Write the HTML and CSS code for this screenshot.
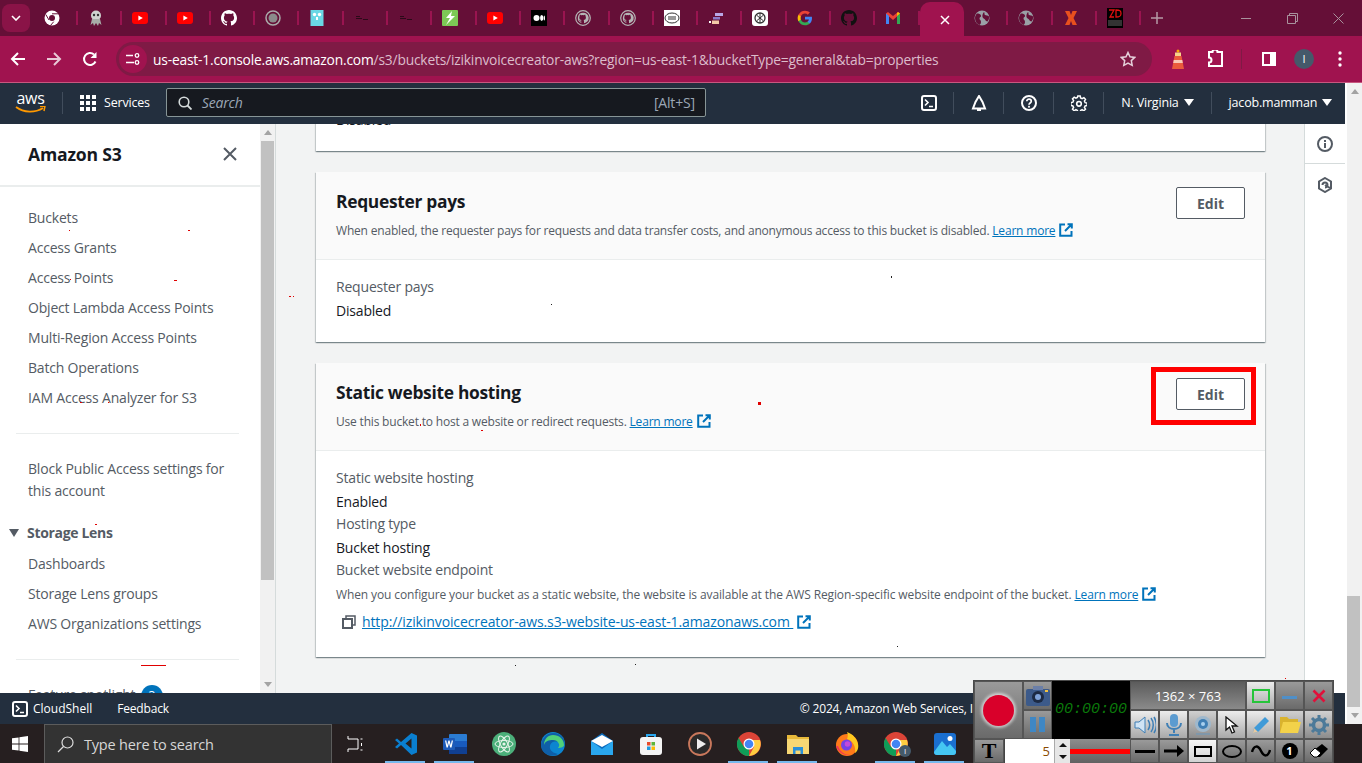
FILE: index.html
```html
<!DOCTYPE html>
<html lang="en">
<head>
    <meta charset="UTF-8">
    <title>izikinvoicecreator-aws - S3 bucket</title>
    <link rel="stylesheet" href="styles.css">
</head>
<body>
    <svg class="defs" width="0" height="0">
        <symbol id="gh" viewBox="0 0 16 16"><path fill="currentColor" d="M8 0C3.6 0 0 3.6 0 8c0 3.5 2.3 6.5 5.5 7.6.4.1.5-.2.5-.4v-1.4c-2.2.5-2.7-1-2.7-1-.4-.9-.9-1.2-.9-1.2-.7-.5.1-.5.1-.5.8.1 1.2.8 1.2.8.7 1.2 1.9.9 2.3.7.1-.5.3-.9.5-1.1-1.8-.2-3.6-.9-3.6-4 0-.9.3-1.6.8-2.1-.1-.2-.4-1 .1-2.1 0 0 .7-.2 2.2.8.6-.2 1.3-.3 2-.3s1.4.1 2 .3c1.5-1 2.2-.8 2.2-.8.4 1.1.2 1.9.1 2.1.5.6.8 1.3.8 2.1 0 3.1-1.9 3.7-3.7 3.9.3.3.6.8.6 1.5v2.2c0 .2.1.5.6.4C13.7 14.5 16 11.5 16 8c0-4.4-3.6-8-8-8z"/></symbol>
        <symbol id="yt" viewBox="0 0 16 16"><rect y="2" width="16" height="12" rx="3" fill="#f00"/><path d="M6.4 5.4 10.8 8l-4.4 2.6z" fill="#fff"/></symbol>
        <symbol id="globe" viewBox="0 0 16 16"><circle cx="8" cy="8" r="7.5" fill="#9aa0a6"/><path d="M3 3.5c2 0 3.5.5 4 2S5.500 7 5.500 8.500 7 10 7 12s-1 2.500-1.500 3C3 14 1 11.500 1 8c0-2 1-3.500 2-4.500zM10 2c1 1 0 2.500 1 3s3 0 4 1.500c.3 2-.5 4-1.500 5-1 0-2-1-2.500-2s-2-1-2.500-2.500S9 3 10 2z" fill="#650f37"/></symbol>
        <symbol id="gitring" viewBox="0 0 16 16"><circle cx="8" cy="8" r="7.300" fill="none" stroke="#b5b5b5" stroke-width="1.200"/><path fill="#b5b5b5" d="M8 2.800a5.200 5.200 0 0 0-1.700 10.100v-1.500c-1.400.3-1.700-.7-1.700-.7-.3-.6-.6-.7-.6-.7-.5-.3 0-.3 0-.3.500 0 .8.500.8.500.5.800 1.200.6 1.500.4.100-.3.200-.6.300-.7-1.200-.1-2.300-.6-2.300-2.500 0-.6.200-1 .5-1.400-.1-.1-.2-.6.100-1.300 0 0 .5-.1 1.400.5a5 5 0 0 1 2.600 0c.9-.6 1.400-.5 1.400-.5.300.7.100 1.200.1 1.300.3.400.5.800.5 1.400 0 1.900-1.100 2.400-2.300 2.500.2.200.4.500.4 1v2.300A5.200 5.200 0 0 0 8 2.800z"/></symbol>
        <symbol id="ext" viewBox="0 0 14 14"><path d="M6 1.500H1.200v11.300h11.300V8M8.500 1.200h4.300v4.300M12.500 1.500 6 8" fill="none" stroke="#0073bb" stroke-width="2"/></symbol>
        <symbol id="term" viewBox="0 0 16 16"><rect x="1" y="1" width="14" height="14" rx="2" fill="none" stroke="currentColor" stroke-width="2"/><path d="m4 4.500 3 3-3 3M8 11.500h4" fill="none" stroke="currentColor" stroke-width="1.600"/></symbol>
        <symbol id="chromeapp" viewBox="0 0 24 24"><circle cx="12" cy="12" r="12" fill="#db4437"/><path d="M12 24A12 12 0 0 1 1.600 6L7 15l5 1z" fill="#0f9d58"/><path d="M12 24 17 15l-1-7h7A12 12 0 0 1 12 24z" fill="#ffcd40"/><circle cx="12" cy="12" r="5.500" fill="#fff"/><circle cx="12" cy="12" r="4.300" fill="#4285f4"/></symbol>
    </svg>

    <div class="browser">
        <div class="tabstrip">
            <div class="tab-menu"><svg width="10" height="6" viewBox="0 0 10 6"><path d="m1 1 4 4 4-4" fill="none" stroke="#fff" stroke-width="1.600"/></svg></div>
            <div class="tabs">
                <div class="tab"><svg viewBox="0 0 16 16"><circle cx="8" cy="8" r="7.500" fill="#fff"/><circle cx="8" cy="8" r="3" fill="#650f37"/><path d="M8 3.800h6.800M5 10 1.800 4.500M9.700 11.700 6.500 15.500" stroke="#650f37" stroke-width="1"/></svg></div>
                <div class="tab"><svg viewBox="0 0 16 16"><circle cx="8" cy="5.500" r="5" fill="#cfd3cf"/><circle cx="6" cy="5" r="1.200" fill="#333"/><circle cx="10" cy="5" r="1.200" fill="#333"/><path d="M2.500 15 4 9h8l1.500 6-2.500-2-1 3-2-3-2 3-1-3z" fill="#a8aca8"/></svg></div>
                <div class="tab"><svg><use href="#yt"/></svg></div>
                <div class="tab"><svg><use href="#yt"/></svg></div>
                <div class="tab tab-white"><svg><use href="#gh"/></svg></div>
                <div class="tab"><svg viewBox="0 0 16 16"><circle cx="8" cy="8" r="7" fill="none" stroke="#aaa" stroke-width="1.500"/><circle cx="8" cy="8" r="4.500" fill="#8b8b8b"/></svg></div>
                <div class="tab"><svg viewBox="0 0 16 16"><rect x="1.500" width="13" height="16" fill="#6ad7e5"/><circle cx="5.500" cy="4.500" r="1.700" fill="#fff"/><circle cx="10.500" cy="4.500" r="1.700" fill="#fff"/><path d="M7 7h2v3H7z" fill="#fff"/></svg></div>
                <div class="tab"><svg viewBox="0 0 16 16"><path d="M2 6h4v1H2zM2 8h6v1H2zM9 9h5v1H9z" fill="#2a0a18"/></svg></div>
                <div class="tab"><svg viewBox="0 0 16 16"><path d="M2 6h4v1H2zM2 8h6v1H2zM9 9h5v1H9z" fill="#2a0a18"/></svg></div>
                <div class="tab"><svg viewBox="0 0 16 16"><rect width="16" height="16" rx="1" fill="#7dc855"/><path d="M10 1 4 8h4l-4 7 9-9H9z" fill="#fff"/></svg></div>
                <div class="tab"><svg><use href="#yt"/></svg></div>
                <div class="tab"><svg viewBox="0 0 16 16"><rect width="16" height="16" fill="#000"/><circle cx="5.500" cy="8" r="3" fill="#fff"/><ellipse cx="10.700" cy="8" rx="1.600" ry="2.900" fill="#fff"/><ellipse cx="13.300" cy="8" rx=".7" ry="2.500" fill="#fff"/></svg></div>
                <div class="tab"><svg><use href="#gitring"/></svg></div>
                <div class="tab"><svg><use href="#gitring"/></svg></div>
                <div class="tab"><svg viewBox="0 0 16 16"><rect width="16" height="16" fill="#fff"/><ellipse cx="8" cy="8" rx="7" ry="5" fill="none" stroke="#333"/><path d="M4 6.500h8v1H4zM4 8.500h8v1H4z" fill="#333"/></svg></div>
                <div class="tab"><svg viewBox="0 0 16 16"><path d="M7 3h8v3H7z" fill="#b9a7e6"/><path d="M5 7h7v2.500H5z" fill="#8c7ac9"/><path d="M1 11h2v2H1z" fill="#fff"/><path d="M4 10.500h7V14H4z" fill="#f4c8a8"/></svg></div>
                <div class="tab"><svg viewBox="0 0 16 16"><rect width="16" height="16" rx="3" fill="#fff"/><circle cx="8" cy="8" r="5" fill="none" stroke="#333" stroke-width="1.300"/><path d="M5 5.500 11 10.500M11 5.500 5 10.500M8 3v10" stroke="#333"/></svg></div>
                <div class="tab"><svg viewBox="0 0 48 48"><path fill="#4285f4" d="M45 24.500c0-1.600-.1-3.100-.4-4.500H24v8.500h11.800c-.5 2.700-2.100 5-4.400 6.600v5.500h7.100C42.700 36.700 45 31.100 45 24.500z"/><path fill="#34a853" d="M24 46c5.900 0 10.900-2 14.500-5.300l-7.100-5.500c-2 1.300-4.500 2.100-7.400 2.100-5.700 0-10.500-3.800-12.300-9H4.400v5.700C8 41.100 15.400 46 24 46z"/><path fill="#fbbc05" d="M11.700 28.300a13 13 0 0 1 0-8.500v-5.700H4.400a22 22 0 0 0 0 19.900z"/><path fill="#ea4335" d="M24 10.700c3.200 0 6.100 1.100 8.400 3.300l6.300-6.300C34.900 4.200 29.900 2 24 2 15.400 2 8 6.900 4.400 14.100l7.300 5.700c1.800-5.200 6.600-9.100 12.300-9.100z"/></svg></div>
                <div class="tab tab-black"><svg><use href="#gh"/></svg></div>
                <div class="tab"><svg viewBox="0 0 16 16"><path d="M1 14V3.500L3 2l5 4 5-4 2 1.500V14h-3V6.500L8 10 4 6.500V14z" fill="#ea4335"/><path d="M1 14V3.500L4 6v8z" fill="#4285f4"/><path d="M12 14V6l3-2.500V14z" fill="#34a853"/><path d="M12 6 15 3.500 13 2 12 3z" fill="#fbbc05"/></svg></div>
                <div class="tab tab-active"><svg viewBox="0 0 16 16"><path d="m4 4 8 8M12 4l-8 8" stroke="#fff" stroke-width="1.500"/></svg></div>
                <div class="tab"><svg><use href="#globe"/></svg></div>
                <div class="tab"><svg><use href="#globe"/></svg></div>
                <div class="tab"><svg viewBox="0 0 16 16"><path d="M2 1h4.500L8 5l1.500-4H14l-3.500 7 3.500 7H9.500L8 11l-1.500 4H2l3.500-7z" fill="#e8501e"/></svg></div>
                <div class="tab"><svg viewBox="0 0 16 20" class="zd"><rect width="16" height="20" fill="#000"/><path d="M2 2h5L3 9h4M9 2v7c4 0 5-1 5-3.500S13 2 9 2z" fill="none" stroke="#e01010" stroke-width="1.300"/><rect x="1" y="12" width="14" height="6" fill="#333"/></svg></div>
                <div class="tab-new"><svg width="12" height="12" viewBox="0 0 12 12"><path d="M6 0v12M0 6h12" stroke="#b59aa7" stroke-width="1.500"/></svg></div>
            </div>
            <div class="window-btns">
                <span class="win-btn"><svg width="11" height="11" viewBox="0 0 11 11"><path d="M0 5.500h10" stroke="#a9929d"/></svg></span>
                <span class="win-btn"><svg width="11" height="11" viewBox="0 0 11 11"><path d="M.5 2.500h8v8h-8zM2.500 2.500v-2h8v8h-2" fill="none" stroke="#a9929d"/></svg></span>
                <span class="win-btn"><svg width="11" height="11" viewBox="0 0 11 11"><path d="m.5.500 10 10M10.500.500l-10 10" stroke="#a9929d"/></svg></span>
            </div>
        </div>

        <div class="toolbar">
            <svg class="tool-btn" width="16" height="16" viewBox="0 0 16 16"><path d="M15 8H2M8 2 2 8l6 6" fill="none" stroke="#fff" stroke-width="2"/></svg>
            <svg class="tool-btn" width="16" height="16" viewBox="0 0 16 16"><path d="M1 8h13M8 2l6 6-6 6" fill="none" stroke="#e9c9d7" stroke-width="2"/></svg>
            <svg class="tool-btn" width="16" height="16" viewBox="0 0 16 16"><path d="M13.500 10.500A6 6 0 1 1 12 3.500" fill="none" stroke="#fff" stroke-width="2"/><path d="M14.500 1v6h-6z" fill="#fff"/></svg>
            <div class="omnibox">
                <span class="site-info"><svg width="14" height="14" viewBox="0 0 14 14"><path d="M0 3.500h7M0 10.500h8" stroke="#fff" stroke-width="1.500"/><circle cx="11" cy="3.500" r="1.800" fill="none" stroke="#fff" stroke-width="1.300"/><circle cx="11" cy="10.500" r="1.800" fill="none" stroke="#fff" stroke-width="1.300"/></svg></span>
                <span class="url"><b>us-east-1.console.aws.amazon.com</b>/s3/buckets/izikinvoicecreator-aws?region=us-east-1&amp;bucketType=general&amp;tab=properties</span>
                <svg class="star" width="16" height="16" viewBox="0 0 16 16"><path d="m8 1.500 2 4.300 4.700.6-3.400 3.200.9 4.700L8 12l-4.200 2.300.9-4.700L1.300 6.400 6 5.800z" fill="none" stroke="#e5d0da" stroke-width="1.500"/></svg>
            </div>
            <div class="tool-right">
                <svg class="lighthouse" width="14" height="20" viewBox="0 0 14 20"><circle cx="7" cy="2" r="1.500" fill="#f9ab00"/><path d="M4 3.500h6V7H4z" fill="#f6d58a"/><path d="M3.500 7h7l2.500 13H1z" fill="#ea5b3c"/><path d="M2.700 11h8.600l.5 3H2.200z" fill="#f9c9b4"/></svg>
                <svg class="puzzle" width="18" height="18" viewBox="0 0 18 18"><path d="M3 2h3.500a2.500 2.500 0 0 1 5 0H16v14H3v-3.500a2.500 2.500 0 0 0 0-5z" fill="none" stroke="#fff" stroke-width="2"/></svg>
                <span class="tool-sep"></span>
                <svg class="sidepanel" width="14" height="14" viewBox="0 0 14 14"><rect x="1" y="1" width="12" height="12" fill="none" stroke="#fff" stroke-width="2"/><rect x="8" y="1" width="5" height="12" fill="#fff"/></svg>
                <span class="avatar">I</span>
                <svg class="dots" width="4" height="16" viewBox="0 0 4 16"><circle cx="2" cy="2" r="1.700" fill="#fff"/><circle cx="2" cy="8" r="1.700" fill="#fff"/><circle cx="2" cy="14" r="1.700" fill="#fff"/></svg>
            </div>
        </div>

        <div class="viewport">
            <div class="page">
                <header class="aws-header">
                    <div class="aws-logo">
                        <span>aws</span>
                        <svg width="31" height="8" viewBox="0 0 31 8"><path d="M1 1c8 6 19 6 27 1" fill="none" stroke="#f90" stroke-width="1.800"/><path d="m25 .5 5-.5-1 5" fill="none" stroke="#f90" stroke-width="1.500"/></svg>
                    </div>
                    <span class="head-sep first"></span>
                    <svg class="grid-icon" width="16" height="16" viewBox="0 0 16 16"><path fill="#fff" d="M0 0h4v4H0zM6 0h4v4H6zM12 0h4v4h-4zM0 6h4v4H0zM6 6h4v4H6zM12 6h4v4h-4zM0 12h4v4H0zM6 12h4v4H6zM12 12h4v4h-4z"/></svg>
                    <span class="services">Services</span>
                    <div class="search-box">
                        <svg width="14" height="14" viewBox="0 0 14 14"><circle cx="6" cy="6" r="4.800" fill="none" stroke="#d5dbdb" stroke-width="1.600"/><path d="m9.500 9.500 4 4" stroke="#d5dbdb" stroke-width="1.800"/></svg>
                        <span class="search-text">Search</span>
                        <span class="search-key">[Alt+S]</span>
                    </div>
                    <svg class="head-icon term-icon"><use href="#term"/></svg>
                    <span class="head-sep"></span>
                    <svg class="head-icon" viewBox="0 0 16 16"><path d="M8 1 11.500 7l2.500 6.500H2L4.500 7zM6 15.500h4" fill="none" stroke="#fff" stroke-width="2"/></svg>
                    <span class="head-sep"></span>
                    <svg class="head-icon" viewBox="0 0 16 16"><circle cx="8" cy="8" r="7" fill="none" stroke="#fff" stroke-width="2"/><path d="M5.800 6.300C5.800 3.500 10.300 3.500 10.300 6.300c0 1.700-2.300 1.700-2.300 3.500" fill="none" stroke="#fff" stroke-width="1.700"/><rect x="7.100" y="10.800" width="1.800" height="1.800" fill="#fff"/></svg>
                    <span class="head-sep"></span>
                    <svg class="head-icon" viewBox="0 0 16 16"><path d="M6.800 1h2.400l.4 2 1.500.7 1.800-1 1.600 1.700-1.100 1.700.7 1.600 2 .4v2.400l-2 .4-.7 1.500 1.100 1.800-1.700 1.600-1.700-1.100-1.500.7-.4 2H6.800l-.4-2-1.500-.7-1.700 1.100-1.700-1.600 1.100-1.800-.7-1.500-2-.4V7.600l2-.4.7-1.600-1.100-1.700 1.700-1.700 1.700 1 1.500-.7z" fill="none" stroke="#fff" stroke-width="1.500"/><circle cx="8" cy="8.800" r="2.300" fill="none" stroke="#fff" stroke-width="1.600"/></svg>
                    <span class="head-sep"></span>
                    <span class="head-menu region">N. Virginia<i class="caret"></i></span>
                    <span class="head-sep"></span>
                    <span class="head-menu user">jacob.mamman<i class="caret"></i></span>
                </header>

                <div class="main">
                    <nav class="sidenav">
                        <div class="side-title">
                            <span>Amazon S3</span>
                            <svg width="14" height="14" viewBox="0 0 14 14"><path d="m1 1 12 12M13 1 1 13" stroke="#545b64" stroke-width="2"/></svg>
                        </div>
                        <ul class="side-list">
                            <li>Buckets</li>
                            <li>Access Grants</li>
                            <li>Access Points</li>
                            <li>Object Lambda Access Points</li>
                            <li>Multi-Region Access Points</li>
                            <li>Batch Operations</li>
                            <li>IAM Access Analyzer for S3</li>
                        </ul>
                        <hr class="side-rule rule-one">
                        <p class="side-block">Block Public Access settings for this account</p>
                        <div class="side-group"><i class="group-caret"></i>Storage Lens</div>
                        <ul class="side-list sub">
                            <li>Dashboards</li>
                            <li>Storage Lens groups</li>
                            <li>AWS Organizations settings</li>
                        </ul>
                        <hr class="side-rule rule-two">
                        <div class="side-feature">Feature spotlight <span class="feature-badge">3</span></div>
                    </nav>
                    <div class="side-scroll">
                        <i class="arrow-up"></i>
                        <div class="side-thumb"></div>
                        <i class="arrow-down"></i>
                    </div>

                    <div class="content">
                        <section class="card card-cut">
                            <div class="card-body">
                                <div class="value">Disabled</div>
                            </div>
                        </section>

                        <section class="card">
                            <div class="card-head">
                                <div>
                                    <h2>Requester pays</h2>
                                    <p class="desc">When enabled, the requester pays for requests and data transfer costs, and anonymous access to this bucket is disabled. <a class="link">Learn more</a><svg class="ext"><use href="#ext"/></svg></p>
                                </div>
                                <button class="edit-btn">Edit</button>
                            </div>
                            <div class="card-body pays">
                                <div class="label">Requester pays</div>
                                <div class="value">Disabled</div>
                            </div>
                        </section>

                        <section class="card">
                            <div class="card-head">
                                <div>
                                    <h2>Static website hosting</h2>
                                    <p class="desc">Use this bucket to host a website or redirect requests. <a class="link">Learn more</a><svg class="ext"><use href="#ext"/></svg></p>
                                </div>
                                <button class="edit-btn marked">Edit</button>
                            </div>
                            <div class="card-body hosting">
                                <div class="label">Static website hosting</div>
                                <div class="value">Enabled</div>
                                <div class="label">Hosting type</div>
                                <div class="value">Bucket hosting</div>
                                <div class="label">Bucket website endpoint</div>
                                <p class="desc endpoint-note">When you configure your bucket as a static website, the website is available at the AWS Region-specific website endpoint of the bucket. <a class="link">Learn more</a><svg class="ext"><use href="#ext"/></svg></p>
                                <div class="endpoint">
                                    <svg class="copy" width="14" height="14" viewBox="0 0 14 14"><path d="M4 3.500V1h9v9h-2.500" fill="none" stroke="#545b64" stroke-width="1.500"/><rect x="1" y="4" width="9" height="9" fill="none" stroke="#545b64" stroke-width="2"/></svg>
                                    <a class="link big">http://izikinvoicecreator-aws.s3-website-us-east-1.amazonaws.com </a><svg class="ext"><use href="#ext"/></svg>
                                </div>
                            </div>
                        </section>
                    </div>

                    <aside class="help-rail">
                        <div class="rail-btn first">
                            <svg width="16" height="16" viewBox="0 0 16 16"><circle cx="8" cy="8" r="7" fill="none" stroke="#545b64" stroke-width="2"/><path d="M7 7h2v5H7zM7 4h2v2H7z" fill="#545b64"/></svg>
                        </div>
                        <div class="rail-btn">
                            <svg width="16" height="16" viewBox="0 0 16 16"><path d="M8 1 14 4.500v7L8 15l-6-3.500v-7z" fill="none" stroke="#545b64" stroke-width="2"/><path d="M5.500 8a2.500 2.500 0 1 1 2.500 2.500M8 8l5 3" fill="none" stroke="#545b64" stroke-width="2"/></svg>
                        </div>
                    </aside>
                </div>

                <footer class="aws-footer">
                    <svg class="foot-term"><use href="#term"/></svg>
                    <span class="foot-shell">CloudShell</span>
                    <span class="foot-feedback">Feedback</span>
                    <span class="foot-copy">© 2024, Amazon Web Services, I</span>
                </footer>
            </div>
            <div class="page-scroll">
                <i class="arrow-up"></i>
                <div class="page-thumb"></div>
                <i class="arrow-down"></i>
            </div>
        </div>

        <div class="taskbar">
            <svg class="win-logo" width="16" height="16" viewBox="0 0 16 16"><path fill="#fff" d="M0 2.300 6.600 1.400v6.100H0zM7.400 1.300 16 0v7.500H7.400zM0 8.400h6.600v6.200L0 13.700zM7.400 8.400H16V16l-8.600-1.200z"/></svg>
            <div class="task-search">
                <svg width="17" height="17" viewBox="0 0 17 17"><circle cx="10.500" cy="6.500" r="5.500" fill="none" stroke="#ddd" stroke-width="1.200"/><path d="M6.500 10.500 1 16" stroke="#ddd" stroke-width="1.300"/></svg>
                <span>Type here to search</span>
            </div>
            <div class="task-view"><svg width="16" height="16" viewBox="0 0 16 16"><path d="M1 3V0M1 16v-3M1 3h10v10H1M13.500 3h2M14.500 7v3M13.500 14h2" fill="none" stroke="#fff"/></svg></div>
            <div class="task-apps">
                <div class="task-app open"><svg viewBox="0 0 24 24"><path d="M17.500 1 23 3.500v17L17.500 23 7 13l-4 3.500L1 15l4-3.500L1 8l2-1.500L7 10z" fill="#0a7fd0"/><path d="m17.500 6.500-6 5 6 5z" fill="#262020"/></svg></div>
                <div class="task-app open"><svg viewBox="0 0 24 24"><rect x="6" y="2" width="18" height="20" rx="1" fill="#2b7cd3"/><rect x="6" y="9" width="18" height="6" fill="#185abd"/><rect x="6" y="15" width="18" height="7" fill="#103f91"/><rect y="6" width="12" height="12" rx="1" fill="#1e5bb8"/><path d="m2 8.500 1.500 7h1.300L6 11l1.200 4.500h1.300l1.500-7H8.700l-.9 4.600-1.200-4.600H5.400l-1.200 4.600-.9-4.600z" fill="#fff"/></svg></div>
                <div class="task-app"><svg viewBox="0 0 24 24"><circle cx="12" cy="12" r="12" fill="#4caf7a"/><g fill="none" stroke="#e6f4ea" stroke-width="1"><ellipse cx="12" cy="12" rx="9" ry="3.500"/><ellipse cx="12" cy="12" rx="9" ry="3.500" transform="rotate(60 12 12)"/><ellipse cx="12" cy="12" rx="9" ry="3.500" transform="rotate(120 12 12)"/></g><circle cx="12" cy="12" r="1.600" fill="#e6f4ea"/></svg></div>
                <div class="task-app"><svg viewBox="0 0 24 24"><circle cx="12" cy="12" r="12" fill="#0c85d0"/><path d="M3 6C7 0 17-1 22 6c2 3 2 6 1 8-2-5-13-7-14 0-1 4 3 7 8 8-7 4-17 0-17-9 0-3 1-5 3-7z" fill="#0f5fa8"/><path d="M12 3c6 0 11 4 11 10 0 2-3 3-6 3 3-3 0-8-5-8-4 0-8 1-9 5C3 7 7 3 12 3z" fill="#4fd07a"/></svg></div>
                <div class="task-app"><svg viewBox="0 0 24 24"><path d="M1 9 12 1l11 8v13H1z" fill="#0a6cbf"/><path d="M1 9l11 8 11-8v14H1z" fill="#2aa7ee"/><path d="M1 9l11 6 11-6-11-6z" fill="#fff"/></svg></div>
                <div class="task-app"><svg viewBox="0 0 24 24"><path d="M8 6V3h8v3" fill="none" stroke="#2aa7ee" stroke-width="2"/><rect x="1" y="5" width="22" height="18" rx="3" fill="#f4f4f4"/><path d="M8 10h3.500v3.500H8z" fill="#e74c2c"/><path d="M12.500 10H16v3.500h-3.500z" fill="#5db53a"/><path d="M8 14.500h3.500V18H8z" fill="#1f9ae0"/><path d="M12.500 14.500H16V18h-3.500z" fill="#fbbc05"/></svg></div>
                <div class="task-app"><svg viewBox="0 0 24 24"><circle cx="12" cy="12" r="11" fill="#2a2a2a" stroke="#c9785c" stroke-width="1.800"/><path d="M9 6.500v11l9-5.500z" fill="#eee"/></svg></div>
                <div class="task-app open"><svg><use href="#chromeapp"/></svg></div>
                <div class="task-app open"><svg viewBox="0 0 24 24"><path d="M1 3h9l2 2h11v17H1z" fill="#e8b93a"/><path d="M1 7h22v15H1z" fill="#f7d774"/><path d="M7 15h10v7h-2.500v-3.500h-5V22H7z" fill="#2a8fd8"/></svg></div>
                <div class="task-app"><svg viewBox="0 0 24 24"><circle cx="12" cy="13" r="11" fill="#ff7a1a"/><path d="M12 0c6 2 10 7 11 12 1 4-1 8-3 9 1-5-1-12-8-14 1-2 1-5 0-7z" fill="#ffc91f"/><circle cx="11.500" cy="13" r="5.500" fill="#7542e5"/><circle cx="12.500" cy="12" r="2.800" fill="#c44ad8"/><path d="M1 14c2 6 8 10 14 9-5 0-10-3-12-9z" fill="#f0355a"/></svg></div>
                <div class="task-app open badged"><svg><use href="#chromeapp"/></svg><span class="task-badge">I</span></div>
                <div class="task-app open"><svg viewBox="0 0 24 24"><rect x="1" y="1" width="22" height="22" rx="3" fill="#1a6fd0"/><path d="M1 20 9 9l5 6 3-3 6 7v1a3 3 0 0 1-3 3H4a3 3 0 0 1-3-3z" fill="#45c6f2"/><circle cx="17" cy="6.500" r="2.500" fill="#fff"/></svg></div>
            </div>
        </div>
    </div>

    <!-- speckles left in the capture -->
    <svg class="speckles" width="1362" height="763" viewBox="0 0 1362 763">
        <g fill="#e00000">
            <rect x="69" y="230" width="1" height="1"/><rect x="188" y="230" width="2" height="1"/>
            <rect x="70" y="279" width="1" height="1"/><rect x="174" y="280" width="3" height="1"/>
            <rect x="289" y="296" width="2" height="1"/><rect x="293" y="296" width="1" height="1"/>
            <rect x="80" y="402" width="2" height="1"/><rect x="108" y="402" width="1" height="1"/>
            <rect x="95" y="524" width="2" height="1"/><rect x="141" y="665" width="25" height="1"/>
            <rect x="758" y="402" width="3" height="3"/><rect x="420" y="424" width="1" height="2"/>
            <rect x="481" y="430" width="2" height="1"/><rect x="1285" y="678" width="1" height="1"/>
        </g>
        <g fill="#222">
            <rect x="551" y="304" width="1" height="1"/><rect x="891" y="276" width="1" height="2"/>
            <rect x="515" y="665" width="1" height="1"/><rect x="635" y="664" width="1" height="1"/>
            <rect x="897" y="646" width="1" height="1"/>
        </g>
    </svg>

    <!-- screen recorder tool sitting on top of the desktop -->
    <div class="recorder">
        <div class="rec-cell rec-big"><span class="rec-dot"></span></div>
        <div class="rec-cell">
            <svg width="24" height="20" viewBox="0 0 24 20"><rect y="3" width="24" height="17" rx="2" fill="#3c5a8a"/><rect x="7" y="0" width="10" height="4" fill="#6b7fa8"/><circle cx="12" cy="11" r="6" fill="#1c2a44"/><circle cx="12" cy="11" r="3" fill="#7fa2d8"/><rect x="19" y="4" width="3" height="2" fill="#f0c040"/></svg>
        </div>
        <div class="rec-timer">00:00:00</div>
        <div class="rec-cell rec-size">1362 × 763</div>
        <div class="rec-cell light"><span class="rec-frame"></span></div>
        <div class="rec-cell"><span class="rec-min"></span></div>
        <div class="rec-cell"><svg width="14" height="14" viewBox="0 0 14 14"><path d="m1.500 1.500 11 11M12.500 1.500l-11 11" stroke="#e0103a" stroke-width="2.600"/></svg></div>
        <div class="rec-cell rec-pause"><i></i><i></i></div>
        <div class="rec-cell light"><svg width="22" height="20" viewBox="0 0 22 20"><path d="M1 7h4l6-5v16l-6-5H1z" fill="#cfe3f4" stroke="#3f7fb5"/><path d="M14 5c2 3 2 7 0 10M17 3c3 4 3 10 0 14M20 2c3 5 3 11 0 16" fill="none" stroke="#3f7fb5" stroke-width="1.500"/></svg></div>
        <div class="rec-cell light"><svg width="16" height="22" viewBox="0 0 16 22"><rect x="4" y="0" width="8" height="13" rx="4" fill="#5b9bd0"/><path d="M1 9c0 8 14 8 14 0M8 15v4M3 21h10" fill="none" stroke="#3f7fb5" stroke-width="2"/></svg></div>
        <div class="rec-cell mid"><svg width="20" height="20" viewBox="0 0 20 20"><circle cx="10" cy="9" r="8" fill="#9fb8cc"/><circle cx="10" cy="9" r="5" fill="#3f7fb5"/><circle cx="10" cy="9" r="2" fill="#a8d0ef"/><path d="M3 19h14" stroke="#7f97aa" stroke-width="2"/></svg></div>
        <div class="rec-cell light"><svg width="14" height="18" viewBox="0 0 14 18"><path d="M1 1v13l3.500-3 2.500 6 2.500-1-2.500-6H12z" fill="#fff" stroke="#111" stroke-width="1.300"/></svg></div>
        <div class="rec-cell light"><svg width="20" height="20" viewBox="0 0 20 20"><path d="M14 2l4 4L7 17l-5 1 1-5z" fill="#3f9ad8"/><path d="M3 13l4 4-5 1z" fill="#e8c8a0"/></svg></div>
        <div class="rec-cell mid"><svg width="22" height="18" viewBox="0 0 22 18"><path d="M1 1h7l2 2h9v13H1z" fill="#d9b32e"/><path d="M4 6h18l-3 11H1z" fill="#f3d24a"/></svg></div>
        <div class="rec-cell mid"><svg width="20" height="20" viewBox="0 0 20 20"><circle cx="10" cy="10" r="5.500" fill="none" stroke="#4d7a99" stroke-width="3.500"/><path d="M10 0v4M10 16v4M0 10h4M16 10h4M3 3l3 3M14 14l3 3M17 3l-3 3M6 14l-3 3" stroke="#4d7a99" stroke-width="3"/></svg></div>
        <div class="rec-tools">
            <div class="rec-cell rec-t">T</div>
            <div class="rec-input">5</div>
            <div class="rec-spin"><i class="spin-up"></i><i class="spin-down"></i></div>
            <div class="rec-bar"><span></span></div>
        </div>
        <div class="rec-cell"><span class="pen-line"></span></div>
        <div class="rec-cell"><svg width="20" height="12" viewBox="0 0 20 12"><path d="M0 6h14" stroke="#000" stroke-width="3"/><path d="m13 0 7 6-7 6z" fill="#000"/></svg></div>
        <div class="rec-cell lighter"><span class="pen-rect"></span></div>
        <div class="rec-cell"><span class="pen-oval"></span></div>
        <div class="rec-cell"><svg width="20" height="12" viewBox="0 0 20 12"><path d="M1 7C3 0 7 0 10 6s7 6 9-1" fill="none" stroke="#000" stroke-width="2.500"/></svg></div>
        <div class="rec-cell"><span class="pen-num">1</span></div>
        <div class="rec-cell"><svg width="20" height="16" viewBox="0 0 20 16"><path d="M13 1l6 5-8 8H5L1 10z" fill="#000"/><path d="M5 14 1 10l5-5 6 5-4 4z" fill="#fff" stroke="#000"/></svg></div>
    </div>
</body>
</html>
```

FILE: styles.css
```css
*, *::after {
    box-sizing: border-box;
}
html, body {
    margin: 0;
    height: 763px;
    overflow: hidden;
}
body {
    width: 1362px;
    position: relative;
    font-family: "Open Sans", "Noto Sans", sans-serif;
    font-size: 14px;
    letter-spacing: -.19px;
    color: #16191f;
}
.defs {
    position: absolute;
}
.browser {
    height: 763px;
    display: flex;
    flex-direction: column;
}

/* browser chrome */
.tabstrip {
    height: 36px;
    background: #650f37;
    display: flex;
    align-items: center;
}
.tab-menu {
    width: 28px;
    height: 28px;
    margin-left: 2px;
    margin-right: 3.7px;
    border-radius: 8px;
    background: #8a1347;
    display: flex;
    align-items: center;
    justify-content: center;
}
.tabs {
    display: flex;
    align-items: center;
    height: 36px;
    flex: 1;
}
.tab {
    width: 44.3px;
    height: 14px;
    border-right: 2px solid #9a1450;
    padding-left: 10px;
    display: flex;
    align-items: center;
    color: #fff;
}
.tab svg {
    width: 16px;
    height: 16px;
    flex: none;
}
.tab svg.zd {
    height: 20px;
}
.tab-black {
    color: #111;
}
.tab-active {
    height: 36px;
    margin-top: 4px;
    border: 0;
    background: #a0134f;
    border-radius: 10px 10px 0 0;
    padding-left: 17px;
}
.tab-new {
    width: 32px;
    display: flex;
    justify-content: center;
}
.window-btns {
    display: flex;
    width: 139px;
}
.win-btn {
    width: 46px;
    display: flex;
    justify-content: center;
}
.toolbar {
    height: 47px;
    background: #a0134f;
    border-bottom: 1px solid #c7587f;
    display: flex;
    align-items: center;
    padding-left: 10px;
}
.tool-btn {
    margin-right: 20px;
    flex: none;
}
.omnibox {
    width: 1036px;
    height: 34px;
    margin-left: -2px;
    border-radius: 17px;
    background: #7f1a45;
    display: flex;
    align-items: center;
    padding: 0 16px 0 3px;
}
.site-info {
    width: 28px;
    height: 28px;
    border-radius: 50%;
    background: #a0134f;
    display: flex;
    align-items: center;
    justify-content: center;
}
.url {
    margin-left: 6px;
    font-size: 13.8px;
    color: #dcbccb;
    white-space: nowrap;
    flex: 1;
}
.url b {
    font-weight: 400;
    color: #fff;
}
.star {
    flex: none;
}
.tool-right {
    display: flex;
    align-items: center;
    flex: 1;
}
.lighthouse {
    margin-left: 19px;
}
.puzzle {
    margin-left: 21px;
}
.tool-sep {
    width: 1px;
    height: 20px;
    background: #7f1a45;
    margin-left: 17px;
}
.sidepanel {
    margin-left: 20px;
}
.avatar {
    width: 20px;
    height: 20px;
    margin-left: 18px;
    border-radius: 50%;
    background: #45596a;
    color: #fff;
    font-size: 11px;
    text-align: center;
    line-height: 20px;
}
.dots {
    margin-left: 24px;
}

.viewport {
    height: 641px;
    display: flex;
}
.page {
    flex: 1;
    min-width: 0;
    display: flex;
    flex-direction: column;
}
.page-scroll {
    width: 17px;
    background: #f1f1f1;
    position: relative;
    border-left: 2px solid #fff;
}
.page-thumb {
    position: absolute;
    left: 0;
    right: 2px;
    top: 513px;
    height: 111px;
    background: #c1c1c1;
}
.arrow-up, .arrow-down {
    position: absolute;
    left: 50%;
    margin-left: -4px;
    border-left: 4px solid transparent;
    border-right: 4px solid transparent;
}
.arrow-up {
    top: 6px;
    border-bottom: 5px solid #a3a3a3;
}
.arrow-down {
    bottom: 6px;
    border-top: 5px solid #a3a3a3;
}

/* aws console header */
.aws-header {
    height: 41px;
    background: #232f3e;
    display: flex;
    align-items: center;
    color: #fff;
    padding: 0 0 2px 15px;
}
.aws-logo {
    width: 31px;
    height: 26px;
    position: relative;
    line-height: 17px;
    font-size: 16px;
}
.aws-logo span {
    display: block;
    text-align: center;
    letter-spacing: -.3px;
}
.aws-logo svg {
    display: block;
    margin-top: -1px;
}
.head-sep {
    width: 1px;
    height: 22px;
    background: #414d5c;
}
.head-sep.first {
    margin-left: 16px;
    margin-right: 17px;
}
.grid-icon {
    flex: none;
}
.services {
    margin-left: 8px;
    font-size: 12.5px;
}
.search-box {
    width: 540px;
    height: 29px;
    margin-left: 16px;
    background: #16191f;
    border: 1px solid #879596;
    border-radius: 2px;
    display: flex;
    align-items: center;
    padding: 0 10px 0 11px;
}
.search-text {
    margin-left: 10px;
    font-style: italic;
    font-size: 14px;
    color: #9ba7b6;
    flex: 1;
}
.search-key {
    font-size: 14px;
    color: #9ba7b6;
}
.head-icon {
    width: 16px;
    height: 16px;
    flex: none;
    margin: 0 16.5px;
}
.term-icon {
    margin-left: 215px;
    color: #fff;
}
.head-menu {
    font-size: 12.5px;
    white-space: nowrap;
    display: flex;
    align-items: center;
}
.region {
    margin: 0 17px;
}
.user {
    margin-left: 17px;
}
.caret {
    margin-left: 5px;
    border-left: 5px solid transparent;
    border-right: 5px solid transparent;
    border-top: 7px solid #fff;
}

/* main area */
.main {
    height: 569px;
    display: flex;
    overflow: hidden;
    background: #f2f3f3;
}
.sidenav {
    width: 260px;
    flex: none;
    background: #fff;
    overflow: hidden;
    color: #545b64;
}
.side-title {
    height: 63px;
    padding: 0 23px 2px 28px;
    border-bottom: 2px solid #eaeded;
    display: flex;
    align-items: center;
    justify-content: space-between;
    font-size: 17.6px;
    font-weight: 700;
    color: #16191f;
}
.side-list {
    list-style: none;
    margin: 16px 0 0;
    padding: 0 0 0 28px;
}
.side-list li {
    height: 30px;
    line-height: 30px;
    white-space: nowrap;
}
.side-rule {
    margin: 0 21px 0 16px;
    border: 0;
    border-top: 1px solid #eaeded;
}
.rule-one {
    margin-top: 20px;
}
.side-block {
    margin: 24px 20px 0 28px;
    line-height: 22px;
}
.side-group {
    display: flex;
    align-items: center;
    margin-top: 20px;
    padding-left: 9px;
    font-weight: 700;
    line-height: 22px;
    letter-spacing: -.32px;
}
.group-caret {
    width: 0;
    margin-right: 8px;
    border-left: 5px solid transparent;
    border-right: 5px solid transparent;
    border-top: 8px solid #545b64;
}
.side-list.sub {
    margin-top: 5px;
}
.rule-two {
    margin-top: 20px;
}
.side-feature {
    margin: 24px 0 0 28px;
    line-height: 22px;
    white-space: nowrap;
}
.feature-badge {
    display: inline-block;
    width: 22px;
    height: 22px;
    border-radius: 50%;
    background: #0073bb;
    color: #fff;
    text-align: center;
    font-size: 12px;
    margin-left: 2px;
}
.side-scroll {
    width: 16px;
    flex: none;
    background: #f1f1f1;
    position: relative;
    border-right: 1px solid #d5dbdb;
}
.side-thumb {
    position: absolute;
    left: 1px;
    right: 1px;
    top: 17px;
    height: 439px;
    background: #c1c1c1;
}
.content {
    flex: 1;
    min-width: 0;
    padding: 0 39px 0 40px;
}
.card {
    background: #fff;
    margin-top: 21px;
    box-shadow: 0 1px 1px 0 rgba(0, 28, 36, .3), 1px 1px 1px 0 rgba(0, 28, 36, .15), -1px 1px 1px 0 rgba(0, 28, 36, .15);
}
.card-cut {
    margin-top: -24px;
    height: 51px;
    overflow: hidden;
}
.card-cut .card-body {
    padding: 9px 20px 0;
}
.card-head {
    background: #fafafa;
    border-bottom: 1px solid #eaeded;
    display: flex;
    justify-content: space-between;
    height: 88px;
    padding: 15px 20px 0;
}
.card-head > div {
    margin-top: -1px;
}
.card-head h2 {
    margin: 0;
    font-size: 17.4px;
    font-weight: 700;
    line-height: 30px;
    letter-spacing: -.3px;
    color: #16191f;
}
.desc {
    margin: 6px 0 0;
    font-size: 12px;
    line-height: 18px;
    color: #545b64;
    white-space: nowrap;
}
.link {
    color: #0073bb;
    text-decoration: underline;
}
.ext {
    width: 14px;
    height: 14px;
    margin-left: 4px;
    vertical-align: -2px;
}
.edit-btn {
    width: 69px;
    height: 32px;
    background: #fff;
    border: 1px solid #545b64;
    border-radius: 2px;
    font-family: inherit;
    font-size: 14px;
    font-weight: 700;
    letter-spacing: 0;
    color: #545b64;
    position: relative;
    flex: none;
}
/* the red marker drawn round the button in the capture */
.edit-btn.marked::after {
    content: "";
    position: absolute;
    left: -26px;
    top: -12px;
    width: 105px;
    height: 58px;
    border: 5px solid #f00;
}
.card-body {
    padding: 16px 20px 0;
}
.pays {
    height: 82px;
}
.hosting {
    height: 206px;
}
.label, .value {
    line-height: 22px;
    font-size: 14px;
}
.label {
    color: #545b64;
}
.value {
    color: #16191f;
}
.pays .value {
    margin-top: 2px;
}
.hosting .value {
    margin-top: 2px;
}
.endpoint-note {
    margin-top: 5px;
    letter-spacing: -.12px;
}
.endpoint {
    display: flex;
    align-items: center;
    margin-top: 8px;
    padding-left: 6px;
    font-size: 14px;
    letter-spacing: -.11px;
    white-space: pre;
}
.copy {
    margin-right: 6px;
}
.help-rail {
    width: 41px;
    flex: none;
    background: #fff;
    border-left: 1px solid #d5dbdb;
}
.rail-btn {
    display: flex;
    justify-content: center;
    height: 40px;
    padding-top: 12px;
}
.rail-btn.first {
    border-bottom: 1px solid #d5dbdb;
}
.rail-btn:last-child {
    padding-top: 13px;
}

/* console footer */
.aws-footer {
    height: 31px;
    background: #232f3e;
    display: flex;
    align-items: center;
    color: #fff;
    font-size: 12px;
    padding-left: 12px;
    position: relative;
    white-space: nowrap;
}
.foot-term {
    width: 16px;
    height: 16px;
}
.foot-shell {
    margin-left: 5px;
    letter-spacing: 0;
}
.foot-feedback {
    margin-left: 25px;
    letter-spacing: -.19px;
}
.foot-copy {
    margin-left: 631px;
}

/* windows taskbar */
.taskbar {
    height: 39px;
    background: #261f20;
    display: flex;
    align-items: center;
}
.win-logo {
    margin-left: 12px;
    flex: none;
}
.task-search {
    width: 288px;
    height: 39px;
    margin-left: 16px;
    background: #333;
    border: 1px solid #5c5c5c;
    border-bottom: 0;
    display: flex;
    align-items: center;
    padding-left: 12px;
    color: #d6d6d6;
    font-size: 14.5px;
}
.task-search span {
    margin-left: 10px;
}
.task-view {
    width: 49px;
    padding-right: 3px;
    display: flex;
    justify-content: center;
}
.task-apps {
    display: flex;
    height: 39px;
}
.task-app {
    width: 49px;
    display: flex;
    align-items: center;
    justify-content: center;
    position: relative;
}
.task-app svg {
    width: 24px;
    height: 24px;
}
.task-app.open::after {
    content: "";
    position: absolute;
    left: 4px;
    right: 5px;
    bottom: 0;
    height: 2px;
    background: #76b9ed;
}
.task-badge {
    position: absolute;
    right: 9px;
    bottom: 6px;
    width: 12px;
    height: 12px;
    border-radius: 50%;
    background: #45596a;
    color: #fff;
    font-size: 8px;
    line-height: 12px;
    text-align: center;
}

.speckles {
    position: absolute;
    left: 0;
    top: 0;
    pointer-events: none;
}

/* recorder */
.recorder {
    position: absolute;
    left: 974px;
    top: 681px;
    display: grid;
    grid-template-columns: 49px 29px 78px repeat(7, 29px);
    grid-template-rows: 29px 29px 24px;
    width: 359px;
    height: 82px;
    background: #444;
    outline: 1px solid #4a4a4a;
    letter-spacing: 0;
}
.rec-cell {
    display: flex;
    align-items: center;
    justify-content: center;
    background: linear-gradient(#9a9a9a, #6a6a6a);
    border: 1px solid #555;
    overflow: hidden;
}
.rec-cell.light {
    background: linear-gradient(#ececec, #a9a9a9);
}
.rec-cell.mid {
    background: linear-gradient(#d0d0d0, #8c8c8c);
}
.rec-cell.lighter {
    background: linear-gradient(#f7f7f7, #d2d2d2);
}
.rec-big {
    grid-row: 1 / 3;
}
.rec-dot {
    width: 31px;
    height: 31px;
    border-radius: 50%;
    background: #d9002a;
    box-shadow: 0 0 3px 2px rgba(255, 255, 255, .6);
}
.rec-timer {
    grid-row: 1 / 3;
    grid-column: 3;
    background: #000;
    color: #0b7a0b;
    font-family: "Liberation Mono", monospace;
    font-style: italic;
    font-size: 15px;
    line-height: 58px;
    text-align: center;
    overflow: hidden;
}
.rec-size {
    grid-column: 4 / 8;
    color: #fff;
    font-size: 13px;
    background: linear-gradient(#5c5c5c, #8a8a8a);
}
.rec-frame {
    width: 18px;
    height: 14px;
    border: 2px solid #26c43a;
}
.rec-min {
    width: 15px;
    height: 3px;
    margin-top: 4px;
    background: #4f8fc8;
}
.rec-pause {
    grid-row: 2;
    grid-column: 2;
    gap: 3px;
}
.rec-pause i {
    width: 6px;
    height: 15px;
    background: #3f87c4;
}
.rec-tools {
    grid-column: 1 / 4;
    display: flex;
}
.rec-t {
    width: 30px;
    font-family: "Liberation Serif", serif;
    font-size: 22px;
    font-weight: 700;
    color: #000;
    line-height: 1;
}
.rec-input {
    width: 49px;
    margin-left: 1px;
    background: #fff;
    color: #8a4a00;
    text-align: right;
    padding-right: 4px;
    font-size: 13px;
    line-height: 24px;
}
.rec-spin {
    width: 16px;
    background: #e6e6e6;
    position: relative;
    border-left: 1px solid #aaa;
}
.spin-up, .spin-down {
    position: absolute;
    left: 4px;
    border-left: 4px solid transparent;
    border-right: 4px solid transparent;
}
.spin-up {
    top: 4px;
    border-bottom: 4px solid #111;
}
.spin-down {
    bottom: 4px;
    border-top: 4px solid #111;
}
.rec-bar {
    flex: 1;
    background: linear-gradient(#8d8d8d, #616161);
    display: flex;
    align-items: center;
}
.rec-bar span {
    width: 100%;
    height: 5px;
    background: #f00;
}
.pen-line {
    width: 20px;
    height: 3px;
    background: #000;
}
.pen-rect {
    width: 18px;
    height: 11px;
    border: 2px solid #000;
}
.pen-oval {
    width: 20px;
    height: 13px;
    border: 2px solid #000;
    border-radius: 50%;
}
.pen-num {
    width: 16px;
    height: 16px;
    border-radius: 50%;
    background: #000;
    color: #fff;
    font-size: 11px;
    font-weight: 700;
    line-height: 16px;
    text-align: center;
}
```
